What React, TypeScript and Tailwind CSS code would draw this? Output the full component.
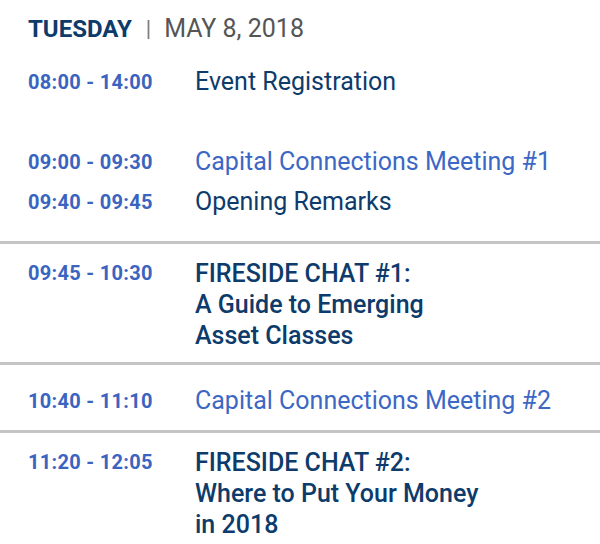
import React from 'react';

type Item = { time: string; title: string[]; link?: boolean; medium?: boolean };

const Row: React.FC<{ item: Item; className?: string }> = ({ item, className = '' }) => (
    <div className={`flex ${className}`}>
        <div className="w-[167px] shrink-0 text-[20px] font-bold leading-[30px] tracking-[0.3px] text-[#3b64c0]">{item.time}</div>
        <div
            className={`text-[25px] ${item.link ? 'text-[#3c67c4]' : 'text-[#0d3b6b]'} ${item.medium ? 'font-medium leading-[31px]' : 'font-normal leading-[30px]'}`}
        >
            {item.title.map((t, i) => (
                <div key={i}>{t}</div>
            ))}
        </div>
    </div>
);

const Divider = () => <div className="h-[3px] bg-[#c4c4c4]" />;

export default function App() {
    return (
        <div className="w-[600px] h-[544px] bg-white overflow-hidden font-['Roboto',sans-serif]">
            <div className="px-[28px] pt-[14px]">
                <div className="flex items-center leading-[30px]">
                    <span className="text-[24px] font-bold text-[#0d3b6b]">TUESDAY</span>
                    <span className="ml-[14px] mr-[13px] text-[22px] text-[#7a7a7a]">|</span>
                    <span className="text-[25px] text-[#555555]">MAY 8, 2018</span>
                </div>
                <Row className="mt-[23px]" item={{ time: '08:00 - 14:00', title: ['Event Registration'] }} />
                <Row className="mt-[50px]" item={{ time: '09:00 - 09:30', title: ['Capital Connections Meeting #1'], link: true }} />
                <Row className="mt-[10px] mb-[24px]" item={{ time: '09:40 - 09:45', title: ['Opening Remarks'] }} />
            </div>
            <Divider />
            <div className="px-[28px] pt-[14px] pb-[11px]">
                <Row item={{ time: '09:45 - 10:30', title: ['FIRESIDE CHAT #1:', 'A Guide to Emerging', 'Asset Classes'], medium: true }} />
            </div>
            <Divider />
            <div className="px-[28px] pt-[21px] pb-[14px]">
                <Row item={{ time: '10:40 - 11:10', title: ['Capital Connections Meeting #2'], link: true }} />
            </div>
            <Divider />
            <div className="px-[28px] pt-[14px]">
                <Row item={{ time: '11:20 - 12:05', title: ['FIRESIDE CHAT #2:', 'Where to Put Your Money', 'in 2018'], medium: true }} />
            </div>
        </div>
    );
}
